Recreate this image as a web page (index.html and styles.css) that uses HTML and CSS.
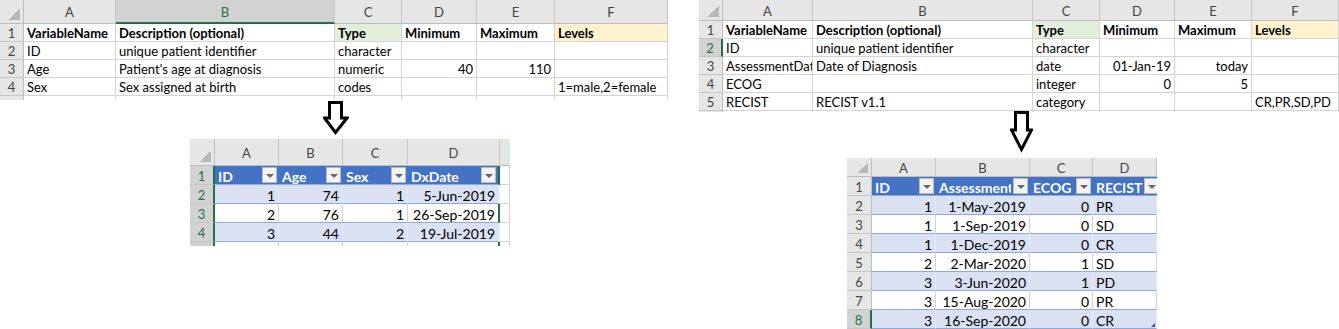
FILE: index.html
```html
<!DOCTYPE html>
<html>
<head>
<meta charset="utf-8">
<link rel="stylesheet" href="styles.css">
</head>
<body>
<div class="page">
  <div class="half half-left">
    <div class="sheet s1">
      <div class="corner"></div><div class="ch">A</div><div class="ch sel">B</div><div class="ch">C</div><div class="ch">D</div><div class="ch">E</div><div class="ch">F</div>
      <div class="rh">1</div><div class="c b">VariableName</div><div class="c b">Description (optional)</div><div class="c b green">Type</div><div class="c b">Minimum</div><div class="c b">Maximum</div><div class="c b yellow">Levels</div>
      <div class="rh">2</div><div class="c">ID</div><div class="c">unique patient identifier</div><div class="c">character</div><div class="c"></div><div class="c"></div><div class="c"></div>
      <div class="rh">3</div><div class="c">Age</div><div class="c">Patient's age at diagnosis</div><div class="c">numeric</div><div class="c r">40</div><div class="c r">110</div><div class="c"></div>
      <div class="rh">4</div><div class="c">Sex</div><div class="c">Sex assigned at birth</div><div class="c">codes</div><div class="c"></div><div class="c"></div><div class="c">1=male,2=female</div>
      <div class="rh"></div><div class="c"></div><div class="c"></div><div class="c"></div><div class="c"></div><div class="c"></div><div class="c"></div>
    </div>
    <svg class="arrow arrow-left" width="26" height="35" viewBox="0 0 26 35"><path d="M6.5 1.5 H18.5 V17 H24 L12.5 31.5 L1.5 17 H6.5 Z" fill="#fff" stroke="#000" stroke-width="3"/></svg>
    <div class="sheet s3">
      <div class="corner"></div><div class="ch">A</div><div class="ch">B</div><div class="ch">C</div><div class="ch">D</div><div class="ch ch-e"></div>
      <div class="rh rsel">1</div><div class="th">ID<span class="fb"></span></div><div class="th">Age<span class="fb"></span></div><div class="th">Sex<span class="fb"></span></div><div class="th th-last">DxDate<span class="fb"></span></div><div class="c"></div>
      <div class="rh rsel">2</div><div class="t band r">1</div><div class="t band r">74</div><div class="t band r">1</div><div class="t band r t-last">5-Jun-2019</div><div class="c"></div>
      <div class="rh rsel">3</div><div class="t r">2</div><div class="t r">76</div><div class="t r">1</div><div class="t r t-last">26-Sep-2019</div><div class="c"></div>
      <div class="rh rsel">4</div><div class="t band r">3</div><div class="t band r">44</div><div class="t band r">2</div><div class="t band r t-last">19-Jul-2019</div><div class="c"></div>
      <div class="rh rsel"></div><div class="c"></div><div class="c"></div><div class="c"></div><div class="c t-last"></div><div class="c"></div>
    </div>
  </div>
  <div class="half half-right">
    <div class="sheet s2">
      <div class="corner"></div><div class="ch">A</div><div class="ch">B</div><div class="ch">C</div><div class="ch">D</div><div class="ch">E</div><div class="ch">F</div>
      <div class="rh">1</div><div class="c b">VariableName</div><div class="c b">Description (optional)</div><div class="c b green">Type</div><div class="c b">Minimum</div><div class="c b">Maximum</div><div class="c b yellow">Levels</div>
      <div class="rh rsel">2</div><div class="c">ID</div><div class="c">unique patient identifier</div><div class="c">character</div><div class="c"></div><div class="c"></div><div class="c"></div>
      <div class="rh">3</div><div class="c">AssessmentDate</div><div class="c">Date of Diagnosis</div><div class="c">date</div><div class="c r">01-Jan-19</div><div class="c r">today</div><div class="c"></div>
      <div class="rh">4</div><div class="c">ECOG</div><div class="c"></div><div class="c">integer</div><div class="c r">0</div><div class="c r">5</div><div class="c"></div>
      <div class="rh">5</div><div class="c">RECIST</div><div class="c">RECIST v1.1</div><div class="c">category</div><div class="c"></div><div class="c"></div><div class="c">CR,PR,SD,PD</div>
      <div class="rh"></div><div class="c"></div><div class="c"></div><div class="c"></div><div class="c"></div><div class="c"></div><div class="c"></div>
    </div>
    <svg class="arrow arrow-right" width="23" height="43" viewBox="0 0 23 43"><path d="M5.5 1.5 H17.5 V19 H21.5 L11.5 38.5 L1.5 19 H5.5 Z" fill="#fff" stroke="#000" stroke-width="3"/></svg>
    <div class="sheet s4">
      <div class="corner"></div><div class="ch">A</div><div class="ch">B</div><div class="ch">C</div><div class="ch">D</div>
      <div class="rh">1</div><div class="th">ID<span class="fb"></span></div><div class="th"><span class="tt">Assessment</span><span class="fb"></span></div><div class="th">ECOG<span class="fb"></span></div><div class="th">RECIST<span class="fb"></span></div>
      <div class="rh">2</div><div class="t band r">1</div><div class="t band r">1-May-2019</div><div class="t band r">0</div><div class="t band">PR</div>
      <div class="rh">3</div><div class="t r">1</div><div class="t r">1-Sep-2019</div><div class="t r">0</div><div class="t">SD</div>
      <div class="rh">4</div><div class="t band r">1</div><div class="t band r">1-Dec-2019</div><div class="t band r">0</div><div class="t band">CR</div>
      <div class="rh">5</div><div class="t r">2</div><div class="t r">2-Mar-2020</div><div class="t r">1</div><div class="t">SD</div>
      <div class="rh">6</div><div class="t band r">3</div><div class="t band r">3-Jun-2020</div><div class="t band r">1</div><div class="t band">PD</div>
      <div class="rh">7</div><div class="t r">3</div><div class="t r">15-Aug-2020</div><div class="t r">0</div><div class="t">PR</div>
      <div class="rh rsel">8</div><div class="t band r">3</div><div class="t band r">16-Sep-2020</div><div class="t band r">0</div><div class="t band handle">CR</div>
    </div>
  </div>
</div>
</body>
</html>
```

FILE: styles.css
```css
* { box-sizing: border-box; }
html, body { margin: 0; padding: 0; background: #fff; }
body { font-family: Lato, "Open Sans", sans-serif; font-size: 13px; color: #000; }

.page { display: flex; width: 1339px; height: 329px; overflow: hidden; }
.half { display: flex; flex-direction: column; }
.half-left { width: 699px; }
.half-right { flex: 1; }

.sheet { display: grid; overflow: hidden; }
.s1 { width: 668px; height: 100px; grid-template-columns: 24px 92px 219px 67px 75px 78px 113px; grid-template-rows: 24px repeat(5, 18px); }
.s2 { width: 640px; height: 112px; grid-template-columns: 24px 90px 220px 67px 75px 77px 87px; grid-template-rows: 21px repeat(6, 18px); }
.s3 { width: 320px; height: 107px; margin: 3px 0 0 190px; grid-template-columns: 25px 64px 64px 65px 92px 10px; grid-template-rows: 27px repeat(5, 19px); font-size: 14px; }
.s4 { width: 310px; height: 171px; margin: 4px 0 0 148px; grid-template-columns: 25px 64px 94px 63px 64px; grid-template-rows: 19px repeat(8, 19px); font-size: 14px; }

.arrow { display: block; }
.arrow-left { margin-left: 323px; margin-top: 1px; }
.arrow-right { margin-left: 311px; margin-top: -1px; }

.c, .t, .th, .ch, .rh, .corner {
  display: flex; align-items: center; padding-top: 2px;
  white-space: nowrap; overflow: hidden; line-height: 15px; min-width: 0;
}
.c { border-right: 1px solid #d4d4d4; border-bottom: 1px solid #d4d4d4; padding-left: 3px; padding-right: 3px; }
.c.b { font-weight: bold; }
.r { justify-content: flex-end; }
.green { background: #e2efda; }
.yellow { background: #fff2cc; }

.corner {
  background: linear-gradient(135deg, transparent 50%, #b7b7b7 50%) no-repeat right 3px bottom 3px / 11px 11px, #e6e6e6;
  border-right: 1px solid #bdbdbd; border-bottom: 1px solid #bdbdbd;
}
.ch {
  background: #e6e6e6; color: #444; justify-content: center; font-size: 13px;
  border-right: 1px solid #c6c6c6; border-bottom: 1px solid #bdbdbd;
}
.ch.sel { background: #d2d2d2; color: #217346; border-bottom: 2px solid #217346; }
.ch-e { background: #dfe8e1; border-right: 0; }
.rh {
  background: #e6e6e6; color: #444; justify-content: center; font-size: 13px;
  border-right: 1px solid #bdbdbd; border-bottom: 1px solid #c6c6c6;
}
.rh.rsel { color: #217346; background: #d2d2d2; border-right: 2px solid #217346; }

.th {
  background: #4472c4; color: #fff; font-weight: bold; padding-left: 3px; padding-right: 2px;
  border-bottom: 1px solid #8ea9db; justify-content: space-between; gap: 2px;
}
.tt { overflow: hidden; min-width: 0; flex: 1; }
.fb {
  flex: none; width: 15px; height: 16px; margin-top: -2px; background: #f3f3f3;
  border: 1px solid #bcbcbc; position: relative;
}
.fb::after {
  content: ""; position: absolute; left: 3px; top: 6px;
  border-left: 4px solid transparent; border-right: 4px solid transparent; border-top: 4px solid #666;
}
.t { padding-left: 3px; padding-right: 3px; border-bottom: 1px solid #8ea9db; border-right: 1px solid #d4d4d4; }
.t.band { background: #d9e1f2; border-right-color: #e6ebf6; }
.th-last, .t-last { border-right: 2px solid #217346; }
.handle { position: relative; }
.handle::after {
  content: ""; position: absolute; right: 1px; bottom: 1px;
  border-left: 4px solid transparent; border-bottom: 4px solid #2f5597;
}
```
